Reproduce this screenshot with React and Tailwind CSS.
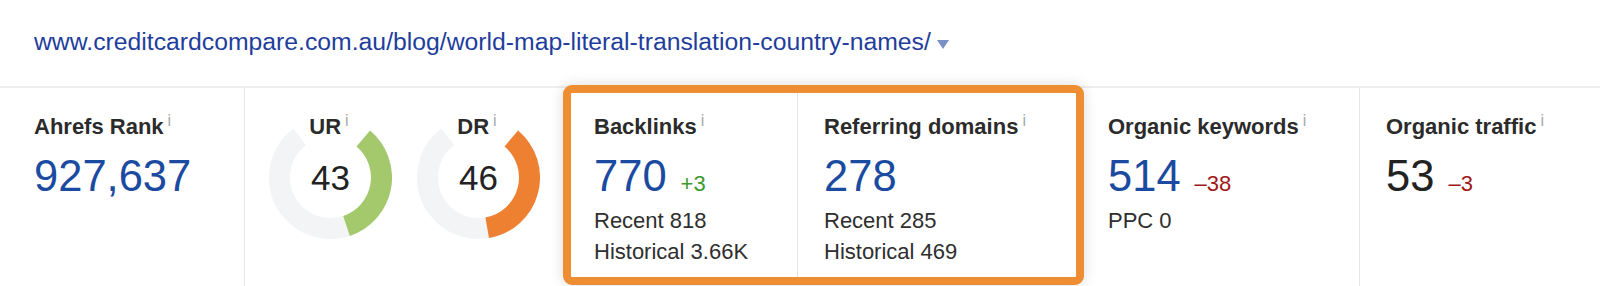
import React from "react";

const font = { fontFamily: '"Liberation Sans", Arial, Helvetica, sans-serif' };

// point on a circle, angle in degrees measured clockwise from 12 o'clock
const point = (c, r, a) => {
  const rad = (a * Math.PI) / 180;
  return [c + r * Math.sin(rad), c - r * Math.cos(rad)];
};

const arcPath = (c, r, a0, a1) => {
  const [x0, y0] = point(c, r, a0);
  const [x1, y1] = point(c, r, a1);
  const large = a1 - a0 > 180 ? 1 : 0;
  return `M ${x0} ${y0} A ${r} ${r} 0 ${large} 1 ${x1} ${y1}`;
};

function Info() {
  return (
    <span className="relative -top-[8px] ml-[4px] text-[16px] font-normal leading-none text-[#a8a8a8]">
      i
    </span>
  );
}

function Title({ children }) {
  return (
    <div className="text-[22px] font-bold leading-[30px] text-[#2b2b2b] whitespace-nowrap">
      {children}
      <Info />
    </div>
  );
}

function Ring({ label, value, color }) {
  const start = 40;
  const end = 323;
  const stop = start + (value / 100) * (end - start);
  return (
    <div className="relative h-[123px] w-[123px]">
      <svg width="123" height="123" viewBox="0 0 123 123">
        <path d={arcPath(61.5, 51, start, end)} stroke="#f3f4f5" strokeWidth="21" fill="none" />
        <path d={arcPath(61.5, 51, start, stop)} stroke={color} strokeWidth="21" fill="none" />
      </svg>
      <div className="absolute left-0 right-0 -top-[4px] flex justify-center pr-[3px]">
        <Title>{label}</Title>
      </div>
      <div className="absolute inset-0 flex items-center justify-center text-[35px] text-[#222] leading-none">
        {value}
      </div>
    </div>
  );
}

function Metric({ title, value, delta, deltaColor, valueColor = "text-[#1b4aa1]", lines = [] }) {
  return (
    <div>
      <Title>{title}</Title>
      <div className="mt-[10px] flex h-[48px] items-baseline leading-[48px] whitespace-nowrap">
        <span className={`text-[43.5px] ${valueColor}`}>{value}</span>
        {delta && <span className={`ml-[14px] text-[22px] ${deltaColor}`}>{delta}</span>}
      </div>
      <div className="mt-[5px] text-[22px] leading-[31px] text-[#2e2e2e]">
        {lines.map((l) => (
          <div key={l}>{l}</div>
        ))}
      </div>
    </div>
  );
}

export default function App() {
  return (
    <div className="h-[286px] w-[1600px] overflow-hidden bg-white" style={font}>
      {/* url header */}
      <div className="h-[86px] pl-[34px] pt-[27px]">
        <div className="flex items-center text-[24.75px] leading-[30px] text-[#1f3e9c]">
          <span>www.creditcardcompare.com.au/blog/world-map-literal-translation-country-names/</span>
          <svg className="ml-[6px] mt-[4px]" width="12" height="9" viewBox="0 0 12 9">
            <path d="M0 0 H12 L6 9 Z" fill="#7b8ec6" />
          </svg>
        </div>
      </div>

      {/* metrics row */}
      <div className="flex h-[200px] border-t-2 border-[#eeeeee]">
        <div className="w-[245px] border-r border-[#e6e6e6] pl-[34px] pt-[24px]">
          <Metric title="Ahrefs Rank" value="927,637" />
        </div>

        <div className="flex w-[318px] gap-[25px] pl-[24px] pt-[28px]">
          <Ring label="UR" value={43} color="#a3c96c" />
          <Ring label="DR" value={46} color="#ee8131" />
        </div>

        <div className="-mt-[3px] flex h-[200px] w-[521px] rounded-[9px] border-[8px] border-[#ef8d32] bg-white shadow-[0_0_14px_rgba(0,0,0,0.14)]">
          <div className="w-[227px] border-r border-[#e6e6e6] pl-[23px] pt-[19px]">
            <Metric
              title="Backlinks"
              value="770"
              delta="+3"
              deltaColor="text-[#3d9a2d]"
              lines={["Recent 818", "Historical 3.66K"]}
            />
          </div>
          <div className="flex-1 pl-[26px] pt-[19px]">
            <Metric title="Referring domains" value="278" lines={["Recent 285", "Historical 469"]} />
          </div>
        </div>

        <div className="w-[276px] border-r border-[#e6e6e6] pl-[24px] pt-[24px]">
          <Metric title="Organic keywords" value="514" delta="–38" deltaColor="text-[#a01818]" lines={["PPC 0"]} />
        </div>

        <div className="flex-1 pl-[26px] pt-[24px]">
          <Metric title="Organic traffic" value="53" valueColor="text-[#222]" delta="–3" deltaColor="text-[#a01818]" />
        </div>
      </div>
    </div>
  );
}
